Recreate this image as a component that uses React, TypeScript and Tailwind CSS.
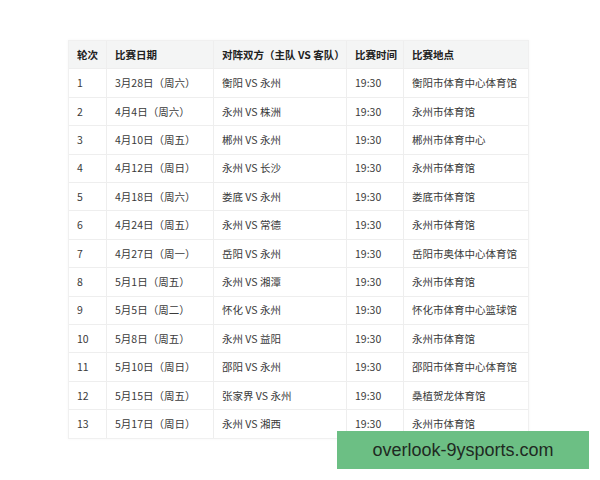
const rows: [string, string, string, string, string][] = [
  ["1", "3月28日（周六）", "衡阳 VS 永州", "19:30", "衡阳市体育中心体育馆"],
  ["2", "4月4日（周六）", "永州 VS 株洲", "19:30", "永州市体育馆"],
  ["3", "4月10日（周五）", "郴州 VS 永州", "19:30", "郴州市体育中心"],
  ["4", "4月12日（周日）", "永州 VS 长沙", "19:30", "永州市体育馆"],
  ["5", "4月18日（周六）", "娄底 VS 永州", "19:30", "娄底市体育馆"],
  ["6", "4月24日（周五）", "永州 VS 常德", "19:30", "永州市体育馆"],
  ["7", "4月27日（周一）", "岳阳 VS 永州", "19:30", "岳阳市奥体中心体育馆"],
  ["8", "5月1日（周五）", "永州 VS 湘潭", "19:30", "永州市体育馆"],
  ["9", "5月5日（周二）", "怀化 VS 永州", "19:30", "怀化市体育中心篮球馆"],
  ["10", "5月8日（周五）", "永州 VS 益阳", "19:30", "永州市体育馆"],
  ["11", "5月10日（周日）", "邵阳 VS 永州", "19:30", "邵阳市体育中心体育馆"],
  ["12", "5月15日（周五）", "张家界 VS 永州", "19:30", "桑植贺龙体育馆"],
  ["13", "5月17日（周日）", "永州 VS 湘西", "19:30", "永州市体育馆"],
];

const head = ["轮次", "比赛日期", "对阵双方（主队 VS 客队）", "比赛时间", "比赛地点"];
const widths = ["w-[38px]", "w-[107px]", "w-[133px]", "w-[57px]", "w-[124px]"];

function Row({ cells, header }: { cells: string[]; header?: boolean }) {
  return (
    <div className={`flex h-[28.4px] border-b border-[#eeeeee] last:border-b-0 ${header ? "bg-[#f4f5f5] font-bold text-[#222]" : "bg-white"}`}>
      {cells.map((c, i) => (
        <div
          key={i}
          className={`${widths[i]} flex shrink-0 items-center overflow-hidden whitespace-nowrap pl-2 ${i < 4 ? "border-r border-[#eeeeee]" : ""}`}
        >
          {c}
        </div>
      ))}
    </div>
  );
}

export default function App() {
  return (
    <div className="relative h-[480px] w-[600px] overflow-hidden bg-white pl-[68px] pt-[40px] font-['Noto_Sans_CJK_SC','Noto_Sans',sans-serif] text-[10.5px] text-[#3a3a3a]">
      <div className="w-[461px] border border-[#f0f0f0] shadow-[0_0_3px_rgba(0,0,0,0.04)]">
        <Row cells={head} header />
        {rows.map((r) => (
          <Row key={r[0]} cells={r} />
        ))}
      </div>

      <div className="absolute left-[337px] top-[431px] flex h-[38px] w-[252px] items-center justify-center bg-[#6cbf84] font-['Liberation_Sans',Arial,sans-serif] text-[18px] text-[#1f2a22]">
        overlook-9ysports.com
      </div>
    </div>
  );
}
